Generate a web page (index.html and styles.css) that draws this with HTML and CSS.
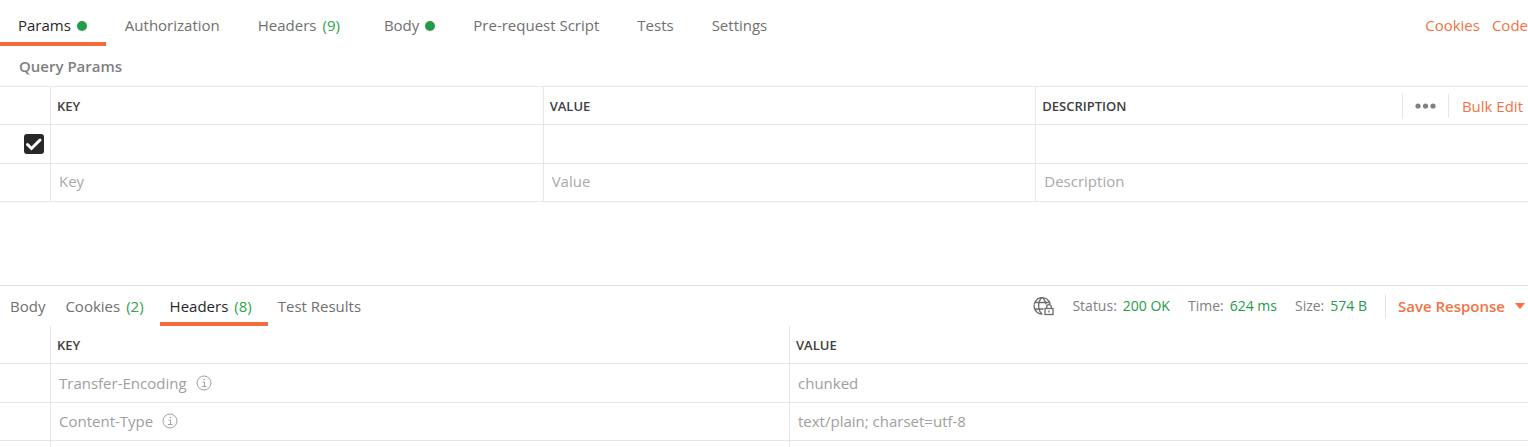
FILE: index.html
```html
<!DOCTYPE html>
<html lang="en">
<head>
<meta charset="utf-8">
<title>Request</title>
<link rel="stylesheet" href="styles.css">
</head>
<body>
<section class="request">
  <div class="bar">
    <nav class="tabs">
      <button class="tab active">Params<span class="dot"></span></button>
      <button class="tab">Authorization</button>
      <button class="tab">Headers<span class="count">(9)</span></button>
      <button class="tab">Body<span class="dot"></span></button>
      <button class="tab">Pre-request Script</button>
      <button class="tab">Tests</button>
      <button class="tab">Settings</button>
    </nav>
    <div class="links"><a href="#">Cookies</a><a href="#">Code</a></div>
  </div>
  <h2 class="title">Query Params</h2>
  <table class="grid params">
    <colgroup><col class="narrow"><col><col><col></colgroup>
    <thead>
      <tr><th></th><th>KEY</th><th>VALUE</th>
        <th><div class="head">DESCRIPTION
          <div class="actions">
            <button class="more" aria-label="More options"><svg width="22" height="6" viewBox="0 0 22 6" fill="#808080"><circle cx="3" cy="3" r="2.6"/><circle cx="10.5" cy="3" r="2.6"/><circle cx="18" cy="3" r="2.6"/></svg></button>
            <button class="bulk">Bulk Edit</button>
          </div>
        </div></th></tr>
    </thead>
    <tbody>
      <tr>
        <td><label class="check"><input type="checkbox" checked aria-label="Enable parameter"><svg viewBox="0 0 20 20" width="20" height="20" fill="none" stroke="#fff" stroke-width="3"><path d="M3.5 10.5 7.5 14.5 16 6" stroke-linecap="round"/></svg></label></td>
        <td><input class="field" aria-label="Key"></td>
        <td><input class="field" aria-label="Value"></td>
        <td><input class="field" aria-label="Description"></td>
      </tr>
      <tr>
        <td></td>
        <td><input class="field" placeholder="Key" aria-label="New key"></td>
        <td><input class="field" placeholder="Value" aria-label="New value"></td>
        <td><input class="field" placeholder="Description" aria-label="New description"></td>
      </tr>
    </tbody>
  </table>
</section>
<section class="response">
  <div class="bar">
    <nav class="tabs">
      <button class="tab">Body</button>
      <button class="tab">Cookies<span class="count">(2)</span></button>
      <button class="tab active">Headers<span class="count">(8)</span></button>
      <button class="tab">Test Results</button>
    </nav>
    <div class="meta">
      <svg class="globe" width="21" height="20" viewBox="0 0 21 20" fill="none" stroke="#6b6b6b" stroke-width="1.3"><path d="M9.5 18A8.2 8.2 0 1 1 17.2 8M9 1.5C4.500 5.500 4.500 14 9 18M9 1.500C11.700 3.500 12.700 5.500 12.900 8.500M2 6.500H16.500M1.500 13H10.500"/><rect x="12" y="12.500" width="8" height="6"/><path d="M13.700 12.500V11a2.300 2.300 0 0 1 4.600 0v1.500M16 14.500v2"/></svg>
      <span class="stat">Status:<b>200 OK</b></span>
      <span class="stat">Time:<b>624 ms</b></span>
      <span class="stat">Size:<b>574 B</b></span>
      <button class="save">Save Response<svg width="10" height="6" viewBox="0 0 10 6" fill="#ff6c37"><path d="M0 0H10L5 6Z"/></svg></button>
    </div>
  </div>
  <table class="grid">
    <colgroup><col class="narrow"><col><col></colgroup>
    <thead><tr><th></th><th>KEY</th><th>VALUE</th></tr></thead>
    <tbody>
      <tr><td></td><td><span class="name">Transfer-Encoding <svg width="16" height="16" viewBox="0 0 16 16" fill="none" stroke="#a0a0a0"><circle cx="8" cy="8" r="7"/><path d="M6.500 7H8.500V11.500M6 11.500H10.500M7.500 4.500H9"/></svg></span></td><td>chunked</td></tr>
      <tr><td></td><td><span class="name">Content-Type <svg width="16" height="16" viewBox="0 0 16 16" fill="none" stroke="#a0a0a0"><circle cx="8" cy="8" r="7"/><path d="M6.500 7H8.500V11.500M6 11.500H10.500M7.500 4.500H9"/></svg></span></td><td>text/plain; charset=utf-8</td></tr>
      <tr><td></td><td></td><td></td></tr>
    </tbody>
  </table>
</section>
</body>
</html>
```
FILE: styles.css
```css
* { box-sizing: border-box; }
body { height: 100vh; margin: 0; overflow: hidden; background: #fff; color: #707070; font: 15px/20px "Open Sans", sans-serif; }
button { border: 0; padding: 0; background: none; color: inherit; font: inherit; cursor: pointer; white-space: nowrap; }
a { color: #f37244; text-decoration: none; }
svg { display: block; flex: none; }

.bar { display: flex; justify-content: space-between; }
.tabs { display: flex; }
.tab { display: flex; align-items: center; border-bottom: 4px solid transparent; }
.tab.active { color: #282828; border-color: #f26b3a; }
.request .tab { height: 46px; padding: 8px 19px 0; }
.request .tab:first-child { padding-left: 18px; }
.dot { width: 10px; height: 10px; margin: 2px 0 0 6px; border-radius: 50%; background: #249c47; }
.count { margin: 0 6px; color: #2ea44f; }
.links { display: flex; gap: 12px; padding-top: 15px; }
.title { margin: 0; padding: 10px 19px; font-size: 15px; font-weight: 600; color: #808080; }

.grid { width: 100%; table-layout: fixed; border-spacing: 0; }
.narrow { width: 50px; }
.grid th, .grid td { height: 39px; padding: 0; border-bottom: 1px solid #e6e6e6; text-align: left; }
.grid th { height: 38px; padding-left: 6px; font-size: 13px; font-weight: 600; color: #404040; }
.grid td { padding-left: 8px; padding-bottom: 1px; color: #a0a0a0; }
.grid tr:nth-child(2) td { height: 38px; }
.grid th + th, .grid td + td { border-left: 1px solid #e6e6e6; }
.params { border-top: 1px solid #e6e6e6; }
.head, .actions { display: flex; align-items: center; }
.head { justify-content: space-between; }
.more { height: 26px; padding: 0 11px 0 12px; border-left: 1px solid #e6e6e6; }
.bulk { height: 24px; padding: 0 5px 0 13px; border-left: 1px solid #e6e6e6; font-size: 15px; font-weight: 400; color: #f37244; }
.field { display: block; width: 100%; height: 34px; padding: 0 0 2px; border: 0; outline: 0; background: none; font: inherit; color: #505050; }
.field::placeholder { color: #a9a9a9; opacity: 1; }
.check { display: grid; justify-content: end; padding-right: 6px; }
.check input, .check svg { grid-area: 1 / 1; }
.check input { appearance: none; width: 20px; height: 20px; margin: 0; border-radius: 3px; background: #282828; }
.check svg { pointer-events: none; }

.response { margin-top: 83px; border-top: 1px solid #e0e0e0; }
.response .tab { height: 40px; padding: 3px 10px 0; }
.meta { display: flex; align-items: center; height: 40px; font-size: 14px; color: #808080; }
.globe { margin-right: 18px; }
.stat { margin-right: 18px; white-space: nowrap; }
.stat b { margin-left: 6px; font-weight: 400; color: #249c47; }
.save { display: flex; align-items: center; gap: 10px; height: 25px; padding: 0 3px 0 12px; border-left: 1px solid #e6e6e6; font-size: 15px; font-weight: 600; color: #f37244; }
.name { display: flex; align-items: center; gap: 9px; }
```
